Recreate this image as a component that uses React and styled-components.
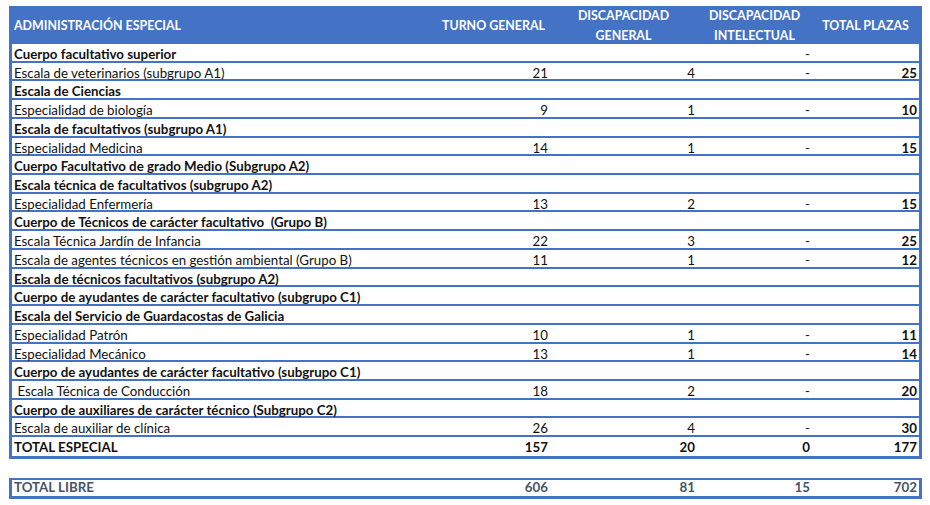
import React from "react";
import styled, { createGlobalStyle } from "styled-components";

const blue = "#4472c4";
const slate = "#44546a";

const Global = createGlobalStyle`
  body {
    margin: 0;
    background: #fff;
    font-family: Lato, "Open Sans", sans-serif;
    color: #111;
  }
`;

const Page = styled.div`
  padding: 6px 0 0 9px;
`;

const Table = styled.div`
  width: 913px;
  box-sizing: border-box;
  border: 3px solid ${blue};
  border-top: 0;
`;

const cols = "425px 113px 147px 115px 107px";

const Head = styled.div`
  display: grid;
  grid-template-columns: ${cols};
  height: 38px;
  margin: 0 -3px;
  padding: 0 3px;
  background: ${blue};
  color: #fff;
  font-weight: 700;
  font-size: 12.4px;
`;

const HeadCell = styled.div`
  display: flex;
  align-items: center;
  justify-content: ${(p) => (p.left ? "flex-start" : "center")};
  text-align: center;
  line-height: 20px;
  padding-left: ${(p) => (p.left ? "2px" : "0")};
`;

const Row = styled.div`
  display: grid;
  grid-template-columns: ${cols};
  height: 18.73px;
  box-sizing: border-box;
  border-bottom: 2px solid ${blue};
  font-size: 13.3px;
  line-height: 15px;
  padding-top: 3px;
  &:last-child {
    border-bottom: 0;
  }
`;

const Label = styled.div`
  padding-left: 2px;
  white-space: pre;
  font-weight: ${(p) => (p.bold ? 700 : 400)};
`;

const Num = styled.div`
  text-align: right;
  padding-right: 2px;
  font-weight: ${(p) => (p.bold ? 700 : 400)};
`;

const Libre = styled.div`
  display: grid;
  grid-template-columns: ${cols};
  align-items: center;
  width: 913px;
  height: 21px;
  margin-top: 19px;
  box-sizing: border-box;
  border: 3px solid ${blue};
  border-top-width: 2px;
  color: ${slate};
  font-size: 13.3px;
  font-weight: 700;
  line-height: 15px;
`;

const rows = [
  { label: "Cuerpo facultativo superior", bold: true, v: ["", "", "-", ""] },
  { label: "Escala de veterinarios (subgrupo A1)", v: ["21", "4", "-", "25"] },
  { label: "Escala de Ciencias", bold: true },
  { label: "Especialidad de biología", v: ["9", "1", "-", "10"] },
  { label: "Escala de facultativos (subgrupo A1)", bold: true },
  { label: "Especialidad Medicina", v: ["14", "1", "-", "15"] },
  { label: "Cuerpo Facultativo de grado Medio (Subgrupo A2)", bold: true },
  { label: "Escala técnica de facultativos (subgrupo A2)", bold: true },
  { label: "Especialidad Enfermería", v: ["13", "2", "-", "15"] },
  { label: "Cuerpo de Técnicos de carácter facultativo  (Grupo B)", bold: true },
  { label: "Escala Técnica Jardín de Infancia", v: ["22", "3", "-", "25"] },
  { label: "Escala de agentes técnicos en gestión ambiental (Grupo B)", v: ["11", "1", "-", "12"] },
  { label: "Escala de técnicos facultativos (subgrupo A2)", bold: true },
  { label: "Cuerpo de ayudantes de carácter facultativo (subgrupo C1)", bold: true },
  { label: "Escala del Servicio de Guardacostas de Galicia", bold: true },
  { label: "Especialidad Patrón", v: ["10", "1", "-", "11"] },
  { label: "Especialidad Mecánico", v: ["13", "1", "-", "14"] },
  { label: "Cuerpo de ayudantes de carácter facultativo (subgrupo C1)", bold: true },
  { label: " Escala Técnica de Conducción", v: ["18", "2", "-", "20"] },
  { label: "Cuerpo de auxiliares de carácter técnico (Subgrupo C2)", bold: true },
  { label: "Escala de auxiliar de clínica", v: ["26", "4", "-", "30"] },
  { label: "TOTAL ESPECIAL", bold: true, total: true, v: ["157", "20", "0", "177"] },
];

export default function App() {
  return (
    <Page>
      <Global />
      <Table>
        <Head>
          <HeadCell left>ADMINISTRACIÓN ESPECIAL</HeadCell>
          <HeadCell>TURNO GENERAL</HeadCell>
          <HeadCell>DISCAPACIDAD<br />GENERAL</HeadCell>
          <HeadCell>DISCAPACIDAD<br />INTELECTUAL</HeadCell>
          <HeadCell>TOTAL PLAZAS</HeadCell>
        </Head>
        {rows.map((r, i) => {
          const v = r.v || ["", "", "", ""];
          return (
            <Row key={i}>
              <Label bold={r.bold}>{r.label}</Label>
              {v.map((x, j) => (
                <Num key={j} bold={r.total || j === 3}>{x}</Num>
              ))}
            </Row>
          );
        })}
      </Table>
      <Libre>
        <Label bold>TOTAL LIBRE</Label>
        <Num bold>606</Num>
        <Num bold>81</Num>
        <Num bold>15</Num>
        <Num bold>702</Num>
      </Libre>
    </Page>
  );
}
